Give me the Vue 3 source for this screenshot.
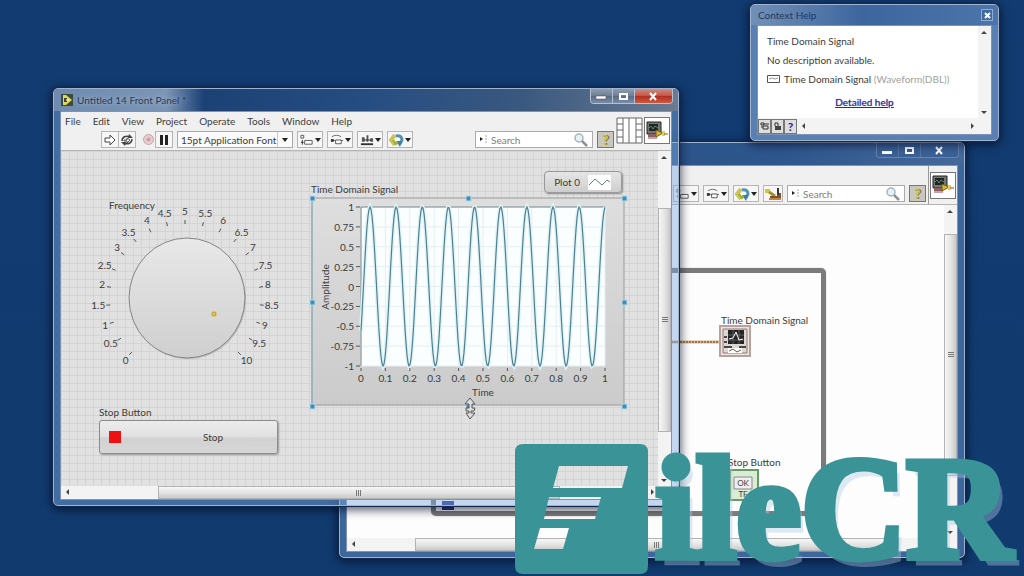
<script setup>
const menus = ['File', 'Edit', 'View', 'Project', 'Operate', 'Tools', 'Window', 'Help']

const knob = { x: 99, y: 108 }
const ticks = Array.from({ length: 21 }, (_, i) => {
  const a = ((-135 + i * 13.5) * Math.PI) / 180
  const text = String(i / 2)
  const sin = Math.sin(a)
  const cos = Math.cos(a)
  const rx = text.length === 1 ? 84 : 87
  return {
    text,
    x1: knob.x + 75 * sin,
    y1: knob.y - 75 * cos,
    x2: knob.x + 79 * sin,
    y2: knob.y - 79 * cos,
    tx: knob.x + rx * sin,
    ty: knob.y - 87 * cos + 3
  }
})

const plot = { left: 50, top: 9, width: 244, height: 159 }
const yTicks = [1, 0.75, 0.5, 0.25, 0, -0.25, -0.5, -0.75, -1].map((v) => ({
  v,
  y: plot.top + ((1 - v) / 2) * plot.height
}))
const xTicks = Array.from({ length: 11 }, (_, i) => ({
  v: String(i / 10),
  x: plot.left + (i / 10) * plot.width
}))
const wave = Array.from({ length: plot.width + 1 }, (_, x) => {
  const y = Math.cos((2 * Math.PI * (x - 9)) / 26.15)
  return `${plot.left + x},${(plot.top + ((1 - y) / 2) * plot.height).toFixed(1)}`
}).join(' ')

const handles = []
for (const x of [1, 157, 313]) {
  for (const y of [0, 104, 208]) {
    if (x !== 157 || y !== 104) handles.push({ x, y })
  }
}
</script>

<template>
  <main class="desktop">
    <svg class="defs" aria-hidden="true">
      <symbol id="caret" viewBox="0 0 6 4"><path d="M0 0h6L3 4z" fill="#222" /></symbol>
      <symbol id="align" viewBox="0 0 15 12">
        <path d="M1 1h3v3H1zM5 6.500h8v4H5z" fill="#fff" stroke="#555" />
        <path d="M2.500 6v5M1 8.500h3" stroke="#333" />
      </symbol>
      <symbol id="distribute" viewBox="0 0 15 12">
        <path d="M2 2.500c3-2 7-2 10 0M1 6.500h13" stroke="#666" fill="none" />
        <path d="M1 5h3v3H1z" fill="#333" />
        <path d="M6 6h6v4H6z" fill="#fff" stroke="#555" />
      </symbol>
      <symbol id="resize" viewBox="0 0 15 12">
        <path d="M1 10.500h13" stroke="#333" stroke-width="2" />
        <path d="M2 3h3v5H2zM7 1h2v7H7zM11 4h3v4h-3z" fill="#555" />
        <path d="M4 6h8" stroke="#222" />
      </symbol>
      <symbol id="reorder" viewBox="0 0 15 14">
        <path d="M6 2 2 7l4 5" stroke="#cdc355" stroke-width="4" fill="none" />
        <path d="M7 3c4-1 6 1 6 4l-2 4" stroke="#5590b3" stroke-width="3" fill="none" />
        <path d="m7 8 4 6 2-6z" fill="#3d7da3" />
        <path d="M4 7l3 4 2-2" stroke="#8fae39" stroke-width="2" fill="none" />
      </symbol>
      <symbol id="lens" viewBox="0 0 14 14">
        <circle cx="5" cy="5" r="4" fill="#e6f1f5" stroke="#a3b6be" stroke-width="1.500" />
        <path d="m8 8 5 5" stroke="#8b9299" stroke-width="2.500" />
      </symbol>
      <symbol id="vi" viewBox="0 0 22 22">
        <path d="M1 2h14v12H1z" fill="#777" stroke="#222" />
        <path d="M3 4h9v7H3z" fill="#1b2620" />
        <path d="m3 8 2-2 2 3 2-3 3 2" stroke="#6c8273" fill="none" />
        <path d="M2 14h9v3H2z" fill="#8d6161" />
        <path d="M10 10l7 3-7 4z" fill="#d8b930" stroke="#705b1b" />
        <path d="M16 11h3v5h-3z" fill="#e4cf55" />
        <path d="M2 18h9M18 14h4" stroke="#8b4848" />
      </symbol>
    </svg>

    <section class="window diagram" aria-label="Block Diagram">
      <header class="titlebar">
        <div class="caption-buttons glass">
          <button aria-label="Minimize"><svg width="11" height="9"><path d="M0 5h10v3H0z" fill="#fff" /></svg></button>
          <button aria-label="Maximize"><svg width="11" height="9"><path d="M2 2h7v5H2z" fill="none" stroke="#fff" stroke-width="2" /></svg></button>
          <button class="wide" aria-label="Close"><svg width="11" height="9"><path d="m2 1 6 7M8 1 2 8" stroke="#fff" stroke-width="2" /></svg></button>
        </div>
      </header>
      <div class="client">
        <div class="bars">
          <div class="bars-left">
            <div class="menubar"></div>
            <div class="toolbar end">
              <button class="tool drop" aria-label="Align"><svg width="14" height="12"><use href="#align" /></svg><svg width="6" height="4"><use href="#caret" /></svg></button>
              <button class="tool drop" aria-label="Distribute"><svg width="14" height="12"><use href="#distribute" /></svg><svg width="6" height="4"><use href="#caret" /></svg></button>
              <button class="tool drop" aria-label="Reorder"><svg width="15" height="14"><use href="#reorder" /></svg><svg width="6" height="4"><use href="#caret" /></svg></button>
              <button class="tool" aria-label="Clean up diagram">
                <svg width="18" height="14"><path d="M1 2h5v4H1z" fill="#d6c431" /><path d="m5 5 6 4" stroke="#99913a" stroke-width="3" /><path d="M6 11h11V6h-4v3H6z" fill="#8b4b36" /><path d="M14 1v7" stroke="#333" stroke-width="2" /><path d="M5 12h12" stroke="#b68d3d" stroke-width="2" /></svg>
              </button>
              <label class="search">
                <svg width="7" height="9"><path d="M0 2l3 2-3 2z" fill="#222" /><path d="M6 0v9" stroke="#aaa" stroke-dasharray="2 1" /></svg>
                <input type="text" placeholder="Search" aria-label="Search diagram" />
                <svg width="14" height="14"><use href="#lens" /></svg>
              </label>
              <button class="tool help" aria-label="Context help">?</button>
            </div>
          </div>
          <div class="vi-box"><div class="vi-icon"><svg width="22" height="22"><use href="#vi" /></svg></div></div>
        </div>
        <div class="work">
          <div class="canvas white">
            <div class="loop"></div>
            <svg class="loop-index" width="12" height="9"><path d="M0 0h12v9H0z" fill="#28348a" /></svg>
            <svg class="wire" width="60" height="4"><path d="M0 2h60" stroke="#d8b78e" stroke-width="3" /><path d="M0 2h60" stroke="#5b3b1c" stroke-dasharray="2 1" /></svg>
            <span class="item signal-label">Time Domain Signal</span>
            <svg class="item signal-terminal" width="32" height="32">
              <path d="M1 1h30v30H1z" fill="#efe3de" stroke="#b7a29e" stroke-width="2" />
              <path d="M4 4h24v24H4z" fill="#ddd6d2" stroke="#8a7d7b" />
              <path d="M9 5h16v14H9z" fill="#252525" />
              <path d="M9 10h16M9 15h16M14 5v14M20 5v14" stroke="#5b5b5b" />
              <path d="m10 14 4-1 3-6 3 8 4-1" stroke="#fff" fill="none" />
              <path d="M5 12h3M5 17h3M5 22h8M20 22h7" stroke="#4d4545" stroke-width="2" />
              <path d="M9 23h14v5H9z" fill="#fff" /><path d="m10 26 4-2 4 3 4-2" stroke="#754f49" fill="none" />
            </svg>
            <span class="item stop-label">Stop Button</span>
            <svg class="item stop-terminal" width="30" height="32">
              <path d="M1 1h28v30H1z" fill="#d9ecd5" stroke="#689b62" stroke-width="2" />
              <path d="M5 8h18v12H5z" fill="#eee" stroke="#888" />
              <text x="14" y="17" class="tiny">OK</text><text x="14" y="28" class="tiny">TF</text>
            </svg>
          </div>
          <div class="vscroll">
            <span class="arrow up"></span><span class="d-v-before"></span><span class="thumb d-v-thumb"></span><span class="d-v-after"></span><span class="arrow down"></span>
          </div>
        </div>
        <div class="hscroll">
          <span class="arrow left"></span><span class="d-h-before"></span><span class="thumb d-h-thumb"></span><span class="d-h-after"></span><span class="arrow right"></span>
        </div>
      </div>
    </section>

    <section class="window front" aria-label="Front Panel">
      <header class="titlebar">
        <svg width="12" height="12"><path d="M0 0h12v12H0z" fill="#3d4b3a" /><path d="M2 1h3l6 5-6 5H2z" fill="#e3d752" /><path d="M3 4h3v4H3z" fill="#3e4b32" /><path d="M5 6h3" stroke="#fff" /></svg>
        <h1 class="glow">Untitled 14 Front Panel *</h1>
        <div class="caption-buttons">
          <button aria-label="Minimize"><svg width="11" height="9"><path d="M0 4h10v3H0z" fill="#fff" stroke="#445" stroke-width=".5" /></svg></button>
          <button aria-label="Maximize"><svg width="11" height="9"><path d="M2 2h7v5H2z" fill="none" stroke="#fff" stroke-width="2" /></svg></button>
          <button class="wide red" aria-label="Close"><svg width="11" height="9"><path d="m2 1 6 7M8 1 2 8" stroke="#fff" stroke-width="2" /></svg></button>
        </div>
      </header>
      <div class="client">
        <div class="bars">
          <div class="bars-left">
            <nav class="menubar">
              <button v-for="m in menus" :key="m">{{ m }}</button>
            </nav>
            <div class="toolbar">
              <div class="group run">
                <button class="tool" aria-label="Run"><svg width="12" height="12"><path d="M1 4h5V1l5 5-5 5V8H1z" fill="#fff" stroke="#444" /></svg></button>
                <button class="tool" aria-label="Run continuously"><svg width="14" height="12"><path d="M2 7c0-4 4-6 8-4M12 5c0 4-4 6-8 4" fill="none" stroke="#444" stroke-width="1.500" /><path d="M9 0l4 4H8zM5 12 1 8h5z" fill="#444" /><path d="M4 6h3V4l3 2-3 3V7H4z" fill="#fff" stroke="#555" /></svg></button>
              </div>
              <div class="group">
                <button class="tool flat" aria-label="Abort"><svg width="13" height="13"><circle cx="6.500" cy="6.500" r="5" fill="#e7cdd0" stroke="#c5a5aa" /><circle cx="6.500" cy="6.500" r="2" fill="#cf9fa5" /></svg></button>
                <button class="tool" aria-label="Pause"><svg width="10" height="10"><path d="M1 0h3v10H1zM6 0h3v10H6z" fill="#222" /></svg></button>
              </div>
              <div class="font-box">
                <select aria-label="Font"><option>15pt Application Font</option></select>
                <svg width="6" height="4"><use href="#caret" /></svg>
              </div>
              <button class="tool drop" aria-label="Align"><svg width="14" height="12"><use href="#align" /></svg><svg width="6" height="4"><use href="#caret" /></svg></button>
              <button class="tool drop" aria-label="Distribute"><svg width="14" height="12"><use href="#distribute" /></svg><svg width="6" height="4"><use href="#caret" /></svg></button>
              <button class="tool drop" aria-label="Resize"><svg width="14" height="12"><use href="#resize" /></svg><svg width="6" height="4"><use href="#caret" /></svg></button>
              <button class="tool drop" aria-label="Reorder"><svg width="15" height="14"><use href="#reorder" /></svg><svg width="6" height="4"><use href="#caret" /></svg></button>
              <label class="search push">
                <svg width="7" height="9"><path d="M0 2l3 2-3 2z" fill="#222" /><path d="M6 0v9" stroke="#aaa" stroke-dasharray="2 1" /></svg>
                <input type="text" placeholder="Search" aria-label="Search panel" />
                <svg width="14" height="14"><use href="#lens" /></svg>
              </label>
              <button class="tool help" aria-label="Context help">?</button>
            </div>
          </div>
          <div class="vi-box plain">
            <svg width="27" height="27"><path d="M1 1h25v25H1z" fill="#fff" /><path d="M1 1v25M7 1v25M13 1v25M20 1v25M26 1v25M1 1h6M1 7h6M1 13h6M1 20h6M1 26h6M20 1h6M20 7h6M20 13h6M20 20h6M20 26h6M7 1h13M7 26h13" stroke="#666" /></svg>
            <div class="vi-icon"><svg width="22" height="22"><use href="#vi" /></svg></div>
          </div>
        </div>
        <div class="work">
          <div class="canvas grid">
            <span class="item freq-label">Frequency</span>
            <svg class="item knob" width="200" height="190" role="img" aria-label="Frequency knob">
              <defs>
                <linearGradient id="face" x1="0" y1="0" x2="0" y2="1"><stop offset="0" stop-color="#e8e8e8" /><stop offset="1" stop-color="#cfcfcf" /></linearGradient>
              </defs>
              <ellipse cx="102" cy="108" rx="58" ry="60" fill="#a5a5a5" opacity=".6" />
              <ellipse cx="101" cy="107" rx="58" ry="60" fill="url(#face)" stroke="#858585" />
              <circle cx="128" cy="123" r="3" fill="#c6a93c" stroke="#e2d094" />
              <circle cx="128" cy="123" r="1" fill="#dbcd96" />
              <g v-for="t in ticks" :key="t.text">
                <line :x1="t.x1" :y1="t.y1" :x2="t.x2" :y2="t.y2" stroke="#555" />
                <text :x="t.tx" :y="t.ty" text-anchor="middle">{{ t.text }}</text>
              </g>
            </svg>
            <label class="item button-label" for="stop">Stop Button</label>
            <button id="stop" class="item stop"><i></i><span>Stop</span></button>
            <span class="item graph-label">Time Domain Signal</span>
            <div class="item legend"><span>Plot 0</span><svg width="23" height="15"><path d="M0 0h23v15H0z" fill="#fff" /><path d="m1 10 6-6 7 6 5-5 3 2" fill="none" stroke="#687b80" /></svg></div>
            <svg class="item graph" width="320" height="222" role="img" aria-label="Time Domain Signal graph">
              <defs>
                <linearGradient id="frame" x1="0" y1="0" x2="0" y2="1"><stop offset="0" stop-color="#dedede" /><stop offset="1" stop-color="#cbcbcb" /></linearGradient>
              </defs>
              <rect x="1" y="0" width="312" height="207" fill="url(#frame)" stroke="#9a9a9a" />
              <path d="M1 208V1" stroke="#7fb4c4" />
              <rect :x="plot.left" :y="plot.top" :width="plot.width" :height="plot.height" fill="#fbfefe" />
              <path v-for="t in yTicks" :key="'g' + t.v" :d="`M${plot.left} ${t.y}h${plot.width}`" stroke="#e5eef0" />
              <path v-for="t in xTicks" :key="'h' + t.v" :d="`M${t.x} ${plot.top}v${plot.height}`" stroke="#e5eef0" />
              <path :d="`M${plot.left} ${plot.top + plot.height}V${plot.top}h${plot.width}`" fill="none" stroke="#77878a" />
              <polyline :points="wave" fill="none" stroke="#e0f3f6" stroke-width="4" />
              <polyline :points="wave" fill="none" stroke="#4d8090" stroke-width="1.200" />
              <g v-for="t in yTicks" :key="t.v">
                <path :d="`M45 ${t.y}h4`" stroke="#555" />
                <text x="43" :y="t.y + 4" text-anchor="end">{{ t.v }}</text>
              </g>
              <g v-for="t in xTicks" :key="t.v">
                <path :d="`M${t.x} 170v3`" stroke="#555" />
                <text :x="t.x" y="184" text-anchor="middle">{{ t.v }}</text>
              </g>
              <text x="172" y="198" text-anchor="middle">Time</text>
              <text transform="translate(18 89) rotate(-90)" text-anchor="middle">Amplitude</text>
              <rect v-for="(h, i) in handles" :key="i" :x="h.x - 2" :y="h.y - 2" width="5" height="5" fill="#3d8fb8" stroke="#b5dcec" />
              <path d="m159 200 5 6h-3v4h3l-1 3h-3v2h4l-5 6-4-6h3v-2h-3v-3h3v-4h-4z" fill="#ddd" stroke="#555" />
            </svg>
          </div>
          <div class="vscroll">
            <span class="arrow up"></span><span class="f-v-before"></span><span class="thumb f-v-thumb"></span><span class="f-v-after"></span><span class="arrow down"></span>
          </div>
        </div>
        <div class="hscroll">
          <span class="arrow left"></span><span class="f-h-before"></span><span class="thumb f-h-thumb"></span><span class="f-h-after"></span><span class="arrow right"></span>
        </div>
      </div>
    </section>

    <section class="window context" aria-label="Context Help">
      <header class="titlebar">
        <h2>Context Help</h2>
        <button class="mini-close" aria-label="Close"><svg width="7" height="7"><path d="m1 1 5 5M6 1 1 6" stroke="#fff" stroke-width="2" /></svg></button>
      </header>
      <div class="client">
        <div class="work">
          <div class="help-text">
            <p>Time Domain Signal</p>
            <p>No description available.</p>
            <p class="row"><svg width="13" height="8"><path d="M.5.5h12v7H.5z" fill="#fff" stroke="#555" /><path d="m2 4 3-1 3 1 3-1" stroke="#999" fill="none" /></svg><span>Time Domain Signal <em>(Waveform(DBL))</em></span></p>
            <a href="#help">Detailed help</a>
          </div>
          <div class="vscroll bare"><span class="arrow up"></span><span class="fill"></span><span class="arrow down"></span></div>
        </div>
        <div class="help-foot">
          <button class="sq" aria-label="Show optional terminals"><svg width="10" height="10"><path d="M1 2h3v2H1zM4 3h5M3 5h5v3H3zM1 6h2" fill="none" stroke="#333" /></svg></button>
          <button class="sq" aria-label="Lock"><svg width="9" height="10"><path d="M2 5V2h3v3" fill="none" stroke="#333" /><path d="M2 5h6v4H2z" fill="#444" /></svg></button>
          <button class="sq q" aria-label="More help">?</button>
          <span class="arrow left"></span><span class="fill"></span><span class="arrow right"></span>
        </div>
      </div>
    </section>

    <div class="brand">
      <svg width="134" height="130" role="img" aria-label="F">
        <path fill="#3a9397" fill-rule="evenodd" d="M8 0H125Q133 0 133 8V122Q133 130 125 130H8Q0 130 0 122V8Q0 0 8 0ZM44 22 38 44H107L113 22ZM34 53 29 75H80L86 53ZM25 84 19 105H48L54 84Z" />
      </svg>
      <span>ileCR</span>
    </div>
  </main>
</template>

<style>
body {
  background: #113c70;
}
</style>

<style scoped>
* {
  box-sizing: border-box;
}
.desktop {
  position: relative;
  min-height: 100vh;
  overflow: hidden;
  background: linear-gradient(#123c71, #113b6f);
  color: #3c3c3c;
  font: 10px/14px Lato, "Open Sans", sans-serif;
}
.defs {
  position: absolute;
  width: 0;
  height: 0;
}
button,
input,
select {
  margin: 0;
  padding: 0;
  border: 0;
  background: none;
  color: inherit;
  font: inherit;
}
svg {
  display: block;
  flex: none;
}
svg text {
  font-size: 10px;
  fill: #3c3c3c;
}
svg text.tiny {
  font-size: 8px;
  text-anchor: middle;
}
h1,
h2,
p {
  margin: 0;
  font-size: 10px;
  font-weight: 400;
}
.window {
  position: absolute;
  display: flex;
  flex-direction: column;
  padding: 0 6px 5px;
  border: 1px solid #9fb3cd;
  border-radius: 5px;
  background: rgba(120, 165, 220, 0.42);
  box-shadow: 0 0 0 1px #16294a, 0 2px 10px 2px rgba(0, 8, 30, 0.65);
}
.front {
  inset: 88px 345px 70px 53px;
  background: rgba(125, 170, 225, 0.45);
}
.diagram {
  inset: 142px 59px 18px 339px;
}
.context {
  top: 4px;
  right: 25px;
  width: 249px;
  background: #5980b3;
}
.titlebar {
  display: flex;
  align-items: center;
  flex: none;
  gap: 4px;
  height: 22px;
  margin: 0 -6px;
  padding: 0 5px 0 7px;
  border-radius: 4px 4px 0 0;
}
.front .titlebar {
  background: linear-gradient(90deg, #6e8baf, #7b95b6 18%, #1c4175 24%, #264d82 50%, #3a587f 75%, #6a7b92);
}
.diagram .titlebar {
  background: linear-gradient(90deg, #274f86, #2d568d 70%, #45699a);
}
.context .titlebar {
  height: 20px;
  justify-content: space-between;
  background: linear-gradient(90deg, #7190b8, #3d669f 45%, #4c75ab);
}
.glow {
  color: #2a3b52;
  text-shadow: 0 0 5px #b9c9dc;
}
.context h2 {
  color: #22395c;
}
.caption-buttons {
  display: flex;
  align-self: flex-start;
  margin-left: auto;
  border: 1px solid #b5c1d0;
  border-top: 0;
  border-radius: 0 0 4px 4px;
  overflow: hidden;
}
.caption-buttons button {
  display: grid;
  place-items: center;
  width: 22px;
  height: 14px;
  border-right: 1px solid #b5c1d0;
  background: linear-gradient(#8f9db0, #6c7d95 50%, #586b86 51%, #7a8ca6);
}
.caption-buttons .wide {
  width: 37px;
  border-right: 0;
}
.caption-buttons .red {
  background: linear-gradient(#d08c80, #c25446 50%, #b02e20 51%, #cc5a42);
}
.caption-buttons.glass {
  border-color: #6684ae;
}
.caption-buttons.glass button {
  border-color: #55769f;
  background: #3a6096;
}
.mini-close {
  display: grid;
  place-items: center;
  width: 12px;
  height: 12px;
  border: 1px solid #8fabcf;
  background: #426a9d;
}
.client {
  display: flex;
  flex: 1;
  flex-direction: column;
  min-height: 0;
  border: 1px solid #7d93b1;
  background: #f0f0f0;
}
.bars {
  display: flex;
  flex: none;
  border-bottom: 1px solid #b4b4b4;
}
.bars-left {
  flex: 1;
  min-width: 0;
}
.menubar {
  display: flex;
  align-items: center;
  gap: 12px;
  height: 17px;
  padding-left: 4px;
}
.toolbar {
  display: flex;
  align-items: center;
  gap: 4px;
  height: 21px;
  padding: 0 2px 0 40px;
}
.toolbar.end {
  justify-content: flex-end;
}
.group {
  display: flex;
}
.tool {
  display: flex;
  align-items: center;
  justify-content: center;
  flex: none;
  gap: 2px;
  width: 18px;
  height: 17px;
  border: 1px solid #b5b5b5;
  background: #f6f6f6;
}
.group .tool + .tool {
  margin-left: -1px;
}
.tool.flat {
  width: 16px;
  border-color: transparent;
  background: none;
}
.tool.drop {
  width: 26px;
  gap: 1px;
}
.diagram .tool:not(.drop):not(.help) {
  width: 20px;
}
.tool.help {
  width: 17px;
  border-color: #777;
  background: #c8c8c0;
  color: #c5c22b;
  font-size: 14px;
  font-weight: 700;
  text-shadow: 1px 0 #66651d;
}
.font-box {
  display: flex;
  align-items: center;
  width: 116px;
  height: 17px;
  padding-right: 4px;
  border: 1px solid #a9a9a9;
  background: #fafafa;
}
.font-box select {
  flex: 1;
  min-width: 0;
  height: 15px;
  padding-left: 3px;
  border-right: 1px solid #ccc;
  margin-right: 4px;
  appearance: none;
}
.search {
  display: flex;
  align-items: center;
  gap: 4px;
  width: 118px;
  height: 17px;
  padding: 0 4px;
  border: 1px solid #aaa;
  background: #fff;
}
.search.push {
  margin-left: auto;
}
.search input {
  flex: 1;
  width: 0;
  height: 15px;
}
.search input::placeholder {
  color: #7d7d7d;
  opacity: 1;
}
.vi-box {
  display: flex;
  align-items: center;
  padding: 0 1px;
  border-left: 1px solid #999;
}
.vi-box.plain {
  align-items: flex-start;
  gap: 1px;
  padding: 5px 1px 0 0;
  border: 0;
}
.vi-icon {
  display: grid;
  place-items: center;
  width: 26px;
  height: 27px;
  border: 1px solid #777;
  background: #fff;
}
.work {
  display: flex;
  flex: 1;
  min-height: 0;
}
.canvas {
  position: relative;
  flex: 1;
  min-width: 0;
  overflow: hidden;
}
.canvas.white {
  background: #fdfdfd;
}
.canvas.grid {
  background-color: #e1e1e1;
  background-image: linear-gradient(#d4d4d4 1px, transparent 1px), linear-gradient(90deg, #d4d4d4 1px, transparent 1px);
  background-size: 8px 8px;
}
.vscroll,
.hscroll,
.help-foot {
  display: flex;
  flex: none;
  align-items: stretch;
  background: #f3f3f3;
}
.vscroll {
  flex-direction: column;
  width: 13px;
}
.hscroll {
  height: 13px;
  padding-right: 13px;
}
.thumb {
  display: grid;
  place-items: center;
  border: 1px solid #b3b3b3;
}
.vscroll .thumb {
  background: linear-gradient(90deg, #f7f7f7, #e3e3e3 55%, #c9c9c9);
}
.hscroll .thumb {
  background: linear-gradient(#f7f7f7, #e3e3e3 55%, #c9c9c9);
}
.thumb::after {
  content: "";
  width: 6px;
  height: 6px;
  background: repeating-linear-gradient(90deg, #777 0 1px, transparent 1px 2px);
}
.vscroll .thumb::after {
  background: repeating-linear-gradient(#777 0 1px, transparent 1px 2px);
}
.arrow {
  display: grid;
  place-items: center;
  flex: none;
  width: 12px;
  height: 12px;
}
.arrow::before {
  content: "";
  border: 3px solid transparent;
}
.arrow.up::before {
  border-top: 0;
  border-bottom-color: #444;
}
.arrow.down::before {
  border-bottom: 0;
  border-top-color: #444;
}
.arrow.left::before {
  border-left: 0;
  border-right-color: #444;
}
.arrow.right::before {
  border-right: 0;
  border-left-color: #444;
}
.f-h-before { flex: 85; }
.f-h-thumb { flex: 403; }
.f-h-after { flex: 86; }
.f-v-before { flex: 45; }
.f-v-thumb { flex: 225; }
.f-v-after { flex: 42; }
.d-h-before { flex: 56; }
.d-h-thumb { flex: 486; }
.d-h-after { flex: 33; }
.d-v-before { flex: 17; }
.d-v-thumb { flex: 246; }
.d-v-after { flex: 51; }

.item,
.loop,
.loop-index,
.wire {
  position: absolute;
  white-space: nowrap;
}
.freq-label {
  left: 48px;
  top: 47px;
}
.knob {
  left: 25px;
  top: 40px;
}
.button-label {
  left: 38px;
  top: 254px;
}
.stop {
  left: 38px;
  top: 269px;
  display: flex;
  align-items: center;
  justify-content: space-between;
  width: 179px;
  height: 34px;
  padding: 0 54px 0 9px;
  border: 1px solid #8d8d8d;
  border-radius: 3px;
  background: linear-gradient(#ededed, #e0e0e0 50%, #d2d2d2 52%, #d6d6d6);
  box-shadow: 1px 1px 2px #999;
}
.stop i {
  width: 12px;
  height: 12px;
  background: #ee1111;
}
.graph-label {
  left: 250px;
  top: 31px;
}
.legend {
  left: 483px;
  top: 20px;
  display: flex;
  align-items: center;
  justify-content: flex-end;
  gap: 8px;
  width: 78px;
  height: 22px;
  padding-right: 10px;
  border: 1px solid #999;
  border-radius: 4px;
  background: linear-gradient(#e5e5e5, #cecece);
  box-shadow: 1px 1px 2px #888;
}
.graph {
  left: 250px;
  top: 47px;
  overflow: visible;
}
.loop {
  left: 84px;
  top: 63px;
  width: 395px;
  height: 248px;
  border: 5px solid #7b7b7b;
  border-radius: 5px;
  box-shadow: 0 0 1px #777;
}
.loop-index {
  left: 95px;
  top: 296px;
}
.wire {
  left: 312px;
  top: 135px;
}
.signal-label {
  left: 374px;
  top: 108px;
}
.signal-terminal {
  left: 372px;
  top: 120px;
}
.stop-label {
  left: 381px;
  top: 250px;
}
.stop-terminal {
  left: 382px;
  top: 264px;
}
.context .client {
  background: #fff;
}
.help-text {
  display: flex;
  flex: 1;
  flex-direction: column;
  gap: 5px;
  padding: 8px 0 9px 9px;
}
.row {
  display: flex;
  align-items: center;
  gap: 4px;
}
em {
  color: #a0a0a0;
  font-style: normal;
}
.help-text a {
  align-self: center;
  margin: 4px 16px 0 0;
  color: #2c2a92;
  text-shadow: 0 0 1px #6d6bc0;
}
.help-foot {
  align-items: center;
  height: 16px;
  padding-right: 13px;
}
.fill {
  flex: 1;
}
.sq {
  display: grid;
  place-items: center;
  width: 13px;
  height: 15px;
  border: 1px solid #777;
  background: #ddd;
}
.sq.q {
  color: #2c2293;
  font-size: 12px;
  font-weight: 700;
}
.brand {
  position: absolute;
  right: 12px;
  bottom: 2px;
  display: flex;
  align-items: flex-end;
  gap: 6px;
  color: #3a9397;
}
.brand span {
  font: 700 146px/130px "Liberation Serif", serif;
  -webkit-text-stroke: 7px #3a9397;
  text-shadow: 6px 8px 0 rgba(170, 200, 225, 0.4);
}
</style>
